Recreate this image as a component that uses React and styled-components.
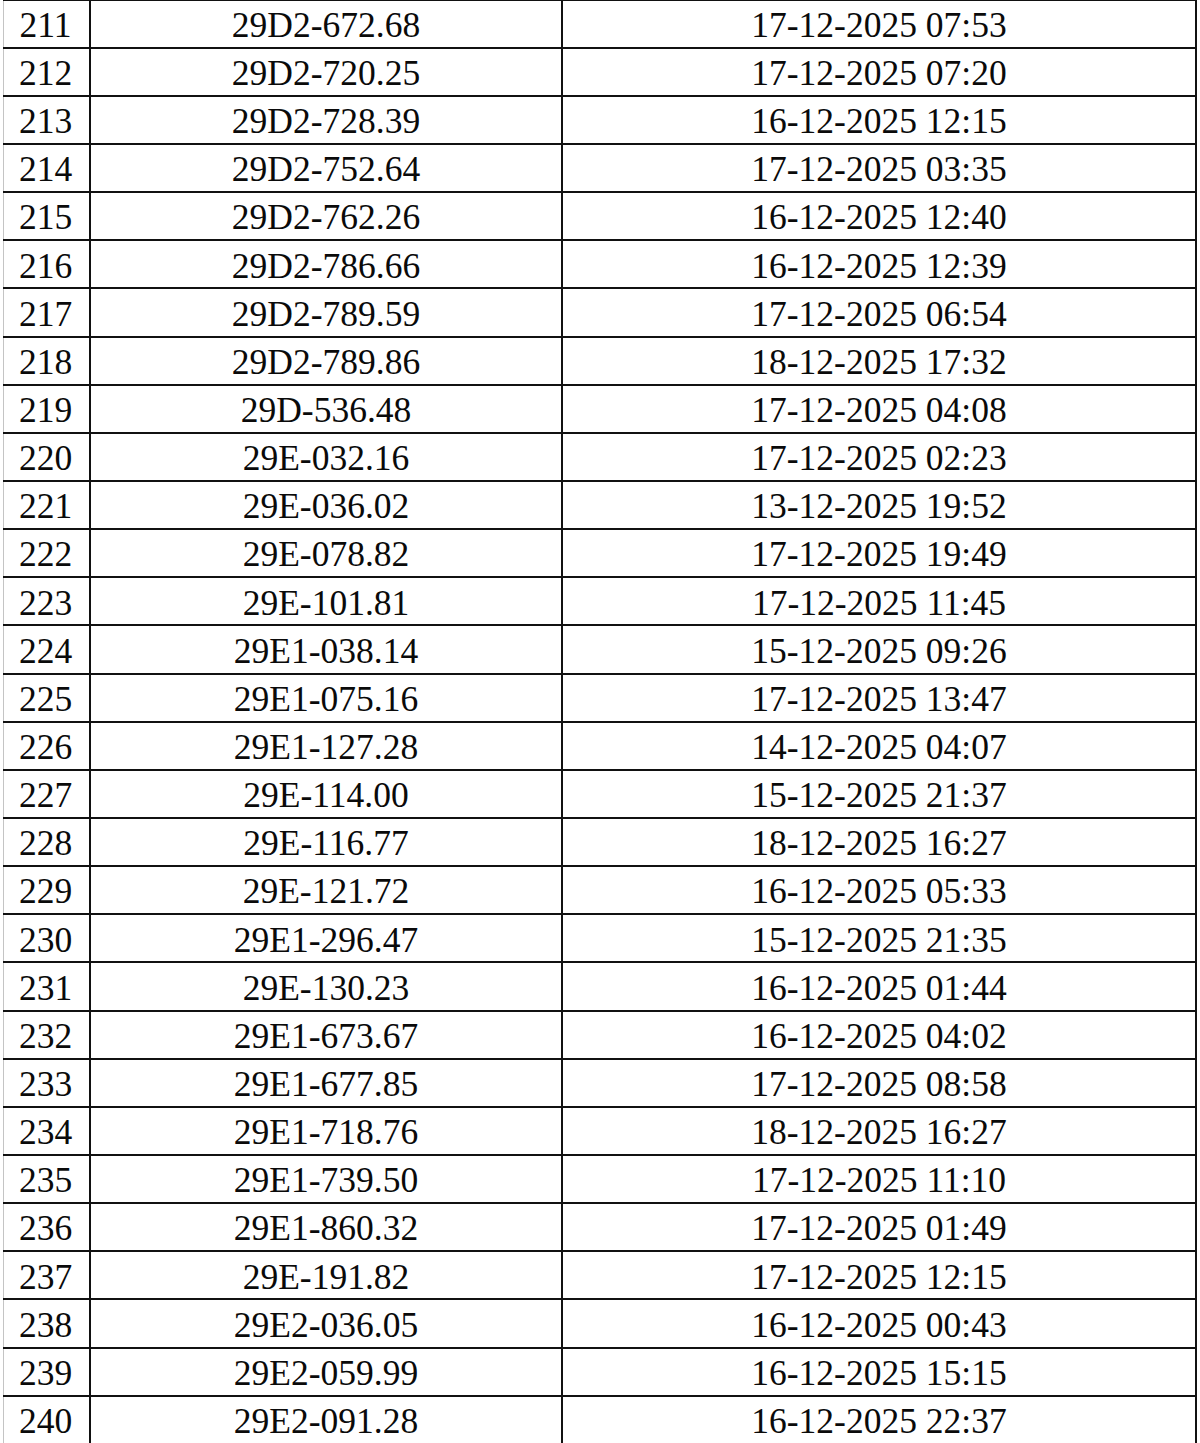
import React from 'react';
import styled, { createGlobalStyle } from 'styled-components';

const GlobalStyle = createGlobalStyle`
  html, body {
    margin: 0;
    padding: 0;
    background: #ffffff;
  }
  body {
    font-family: "Liberation Serif", "Times New Roman", serif;
    color: #0a0a0a;
  }
`;

const dados = [
  ['211', '29D2-672.68', '17-12-2025 07:53'],
  ['212', '29D2-720.25', '17-12-2025 07:20'],
  ['213', '29D2-728.39', '16-12-2025 12:15'],
  ['214', '29D2-752.64', '17-12-2025 03:35'],
  ['215', '29D2-762.26', '16-12-2025 12:40'],
  ['216', '29D2-786.66', '16-12-2025 12:39'],
  ['217', '29D2-789.59', '17-12-2025 06:54'],
  ['218', '29D2-789.86', '18-12-2025 17:32'],
  ['219', '29D-536.48', '17-12-2025 04:08'],
  ['220', '29E-032.16', '17-12-2025 02:23'],
  ['221', '29E-036.02', '13-12-2025 19:52'],
  ['222', '29E-078.82', '17-12-2025 19:49'],
  ['223', '29E-101.81', '17-12-2025 11:45'],
  ['224', '29E1-038.14', '15-12-2025 09:26'],
  ['225', '29E1-075.16', '17-12-2025 13:47'],
  ['226', '29E1-127.28', '14-12-2025 04:07'],
  ['227', '29E-114.00', '15-12-2025 21:37'],
  ['228', '29E-116.77', '18-12-2025 16:27'],
  ['229', '29E-121.72', '16-12-2025 05:33'],
  ['230', '29E1-296.47', '15-12-2025 21:35'],
  ['231', '29E-130.23', '16-12-2025 01:44'],
  ['232', '29E1-673.67', '16-12-2025 04:02'],
  ['233', '29E1-677.85', '17-12-2025 08:58'],
  ['234', '29E1-718.76', '18-12-2025 16:27'],
  ['235', '29E1-739.50', '17-12-2025 11:10'],
  ['236', '29E1-860.32', '17-12-2025 01:49'],
  ['237', '29E-191.82', '17-12-2025 12:15'],
  ['238', '29E2-036.05', '16-12-2025 00:43'],
  ['239', '29E2-059.99', '16-12-2025 15:15'],
  ['240', '29E2-091.28', '16-12-2025 22:37'],
];

const Tabela = styled.div`
  margin: -1.4px 0 0 3px;
  width: 1194px;
  height: 1446px;
  overflow: hidden;
`;

const Linha = styled.div`
  display: grid;
  grid-template-columns: 86px 472px 636px;
  height: 48.15px;
  box-sizing: border-box;
  border-top: 2px solid #111111;
`;

const Celula = styled.div`
  display: flex;
  align-items: center;
  justify-content: center;
  box-sizing: border-box;
  padding-top: 4px;
  font-size: 35.5px;
  line-height: 1;
  white-space: nowrap;
  border-left: ${p => (p.primeira ? '1px solid #c4c4c4' : '2px solid #111111')};
  border-right: ${p => (p.ultima ? '2px solid #111111' : 'none')};
  padding-right: ${p => (p.primeira ? '2px' : '0')};
`;

const App = () => (
  <>
    <GlobalStyle />
    <Tabela>
      {dados.map(([stt, placa, horario]) => (
        <Linha key={stt}>
          <Celula primeira>{stt}</Celula>
          <Celula>{placa}</Celula>
          <Celula ultima>{horario}</Celula>
        </Linha>
      ))}
    </Tabela>
  </>
);

export default App;
